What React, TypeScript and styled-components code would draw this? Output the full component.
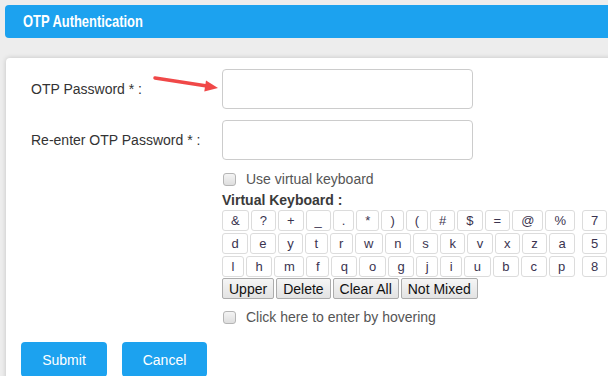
import React from 'react';
import styled, { createGlobalStyle } from 'styled-components';

const GlobalStyle = createGlobalStyle`
  html, body {
    margin: 0;
    padding: 0;
    background: #ededed;
    overflow: hidden;
  }
  body {
    font-family: "Liberation Sans", Arial, sans-serif;
    color: #333;
  }
`;

const Page = styled.div`
  position: relative;
  width: 640px;
  height: 376px;
  padding: 5px 0 0 5px;
`;

const Header = styled.div`
  height: 33px;
  display: flex;
  align-items: center;
  padding-left: 18px;
  background: #1ca2ef;
  border-radius: 4px 0 0 4px;
`;

// the original heading is a condensed bold face
const Title = styled.span`
  display: inline-block;
  color: #fff;
  font-size: 17px;
  font-weight: bold;
  transform: scaleX(0.76);
  transform-origin: left center;
`;

const Card = styled.div`
  margin: 20px 0 0 1px;
  padding: 11px 0 30px 15px;
  background: #fff;
  border-radius: 4px;
  box-shadow: 0 0 5px rgba(0, 0, 0, 0.18);
`;

const FieldRow = styled.div<{ $top?: number }>`
  display: flex;
  align-items: center;
  margin-top: ${(p) => p.$top ?? 0}px;
`;

const Label = styled.label`
  width: 191px;
  padding-left: 10px;
  font-size: 14px;
  color: #333;
`;

const TextInput = styled.input`
  box-sizing: border-box;
  width: 251px;
  height: 40px;
  border: 1px solid #ccc;
  border-radius: 4px;
  background: #fff;
  outline: none;
`;

const Options = styled.div`
  margin-left: 201px;
`;

const CheckRow = styled.div<{ $top: number }>`
  display: flex;
  align-items: center;
  height: 16px;
  margin-top: ${(p) => p.$top}px;
  font-size: 14px;
  color: #555;
`;

const CheckBox = styled.span`
  box-sizing: border-box;
  width: 13px;
  height: 13px;
  margin: 0 10px 0 1px;
  border: 1px solid #b5b5b5;
  border-radius: 3px;
  background: linear-gradient(#f4f4f4, #dedede);
`;

const KeyboardTitle = styled.div`
  margin-top: 5px;
  font-size: 14px;
  line-height: 16px;
  font-weight: bold;
  color: #3a3a3a;
`;

const Keyboard = styled.div`
  display: flex;
  margin-top: 2px;
`;

const KeyColumn = styled.div<{ $width: number; $left?: number }>`
  display: flex;
  flex-direction: column;
  gap: 2px;
  width: ${(p) => p.$width}px;
  margin-left: ${(p) => p.$left ?? 0}px;
`;

const KeyRow = styled.div`
  display: flex;
  gap: 2px;
`;

const Key = styled.div`
  flex: 1 1 auto;
  box-sizing: border-box;
  height: 21px;
  padding: 0 3px;
  display: flex;
  align-items: center;
  justify-content: center;
  border: 1px solid #dcdcdc;
  border-radius: 3px;
  background: #fff;
  font-size: 13px;
  color: #3b3450;
`;

const ActionRow = styled.div`
  display: flex;
  gap: 2px;
  margin-top: 1px;
`;

const ActionButton = styled.button`
  height: 21px;
  padding: 0 6px;
  border: 1px solid #acacac;
  border-radius: 2px;
  background: linear-gradient(#f5f5f5, #e3e3e3);
  font-family: inherit;
  font-size: 14px;
  color: #111;
`;

const Buttons = styled.div`
  display: flex;
  gap: 15px;
  margin-top: 17px;
`;

const PrimaryButton = styled.button<{ $width: number }>`
  width: ${(p) => p.$width}px;
  height: 35px;
  border: none;
  border-radius: 4px;
  background: #1ca2ef;
  color: #fff;
  font-family: inherit;
  font-size: 14px;
`;

const Annotation = styled.svg`
  position: absolute;
  left: 0;
  top: 0;
  pointer-events: none;
`;

const rows = [
  ['&', '?', '+', '_', '.', '*', ')', '(', '#', '$', '=', '@', '%'],
  ['d', 'e', 'y', 't', 'r', 'w', 'n', 's', 'k', 'v', 'x', 'z', 'a'],
  ['l', 'h', 'm', 'f', 'q', 'o', 'g', 'j', 'i', 'u', 'b', 'c', 'p'],
];
const numbers = ['7', '5', '8'];

export default function App() {
  return (
    <Page>
      <GlobalStyle />
      <Header>
        <Title>OTP Authentication</Title>
      </Header>
      <Card>
        <FieldRow>
          <Label>OTP Password * :</Label>
          <TextInput type="password" />
        </FieldRow>
        <FieldRow $top={11}>
          <Label>Re-enter OTP Password * :</Label>
          <TextInput type="password" />
        </FieldRow>
        <Options>
          <CheckRow $top={11}>
            <CheckBox />
            Use virtual keyboard
          </CheckRow>
          <KeyboardTitle>Virtual Keyboard :</KeyboardTitle>
          <Keyboard>
            <KeyColumn $width={353}>
              {rows.map((row, i) => (
                <KeyRow key={i}>
                  {row.map((k) => (
                    <Key key={k}>{k}</Key>
                  ))}
                </KeyRow>
              ))}
            </KeyColumn>
            <KeyColumn $width={25} $left={7}>
              {numbers.map((n) => (
                <Key key={n}>{n}</Key>
              ))}
            </KeyColumn>
          </Keyboard>
          <ActionRow>
            <ActionButton>Upper</ActionButton>
            <ActionButton>Delete</ActionButton>
            <ActionButton>Clear All</ActionButton>
            <ActionButton>Not Mixed</ActionButton>
          </ActionRow>
          <CheckRow $top={10}>
            <CheckBox />
            Click here to enter by hovering
          </CheckRow>
        </Options>
        <Buttons>
          <PrimaryButton $width={86}>Submit</PrimaryButton>
          <PrimaryButton $width={85}>Cancel</PrimaryButton>
        </Buttons>
      </Card>
      <Annotation width="608" height="376" viewBox="0 0 608 376">
        <line x1="155" y1="78" x2="207" y2="86" stroke="#f04848" strokeWidth="3.5" strokeLinecap="round" />
        <polygon points="218,88 206,80.6 204.3,91.4" fill="#f04848" />
      </Annotation>
    </Page>
  );
}
